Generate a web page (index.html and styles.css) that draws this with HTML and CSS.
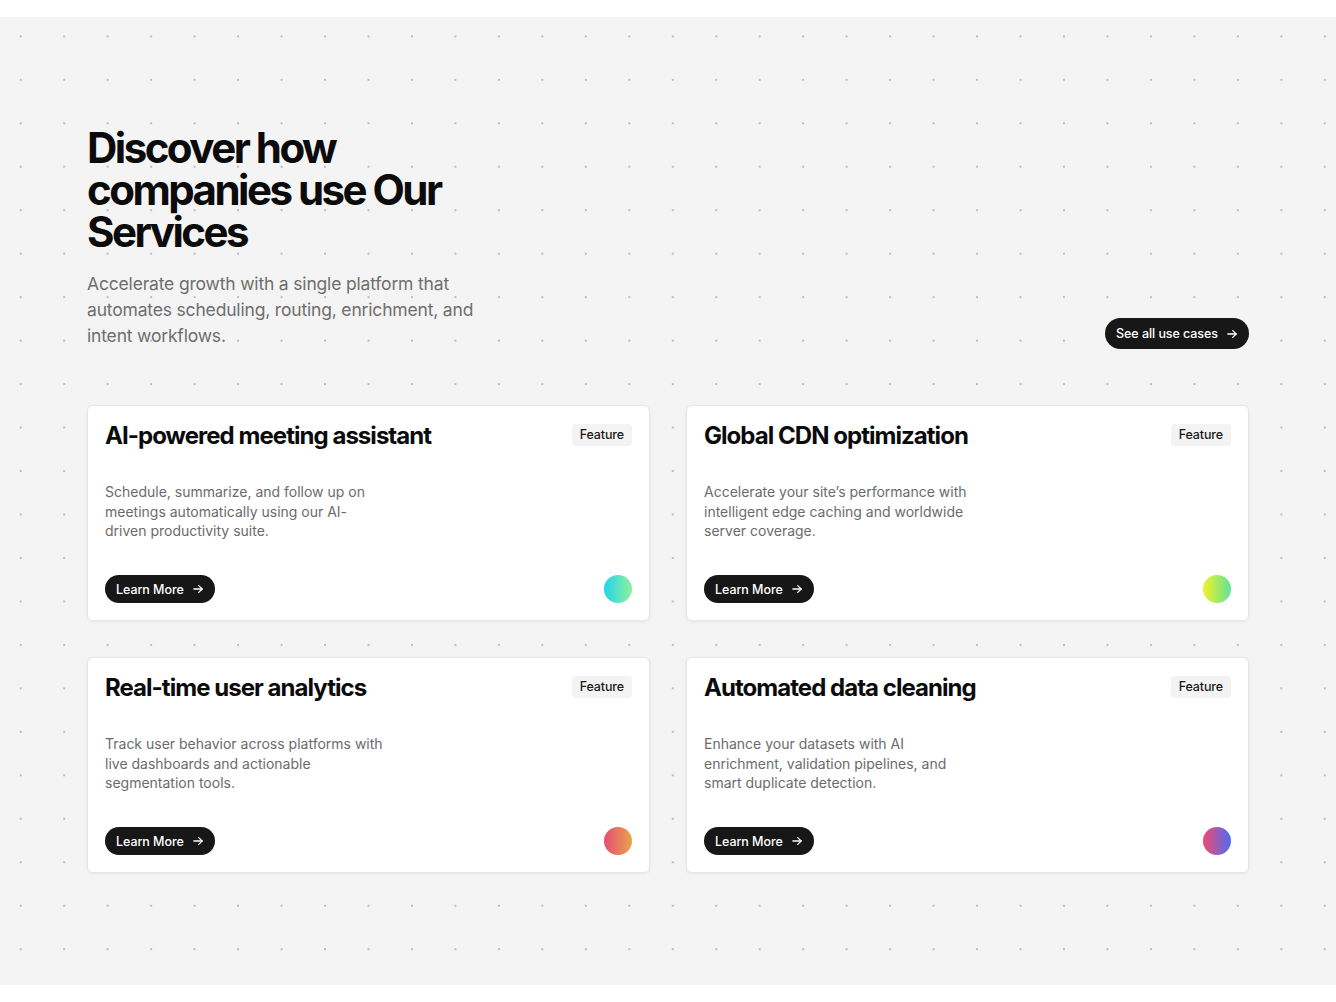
FILE: index.html
```html
<!DOCTYPE html>
<html lang="en">
<head>
<meta charset="utf-8">
<title>Use cases</title>
<link rel="stylesheet" href="styles.css">
</head>
<body>
<div class="page">
  <section class="usecases">
    <div class="container">
      <header class="intro">
        <div class="intro-text">
          <h1 class="intro-title">Discover how companies use Our Services</h1>
          <p class="intro-sub">Accelerate growth with a single platform that automates scheduling, routing, enrichment, and intent workflows.</p>
        </div>
        <a class="pill pill-lg" href="#">See all use cases
          <svg class="arrow" viewBox="0 0 16 16" width="12" height="12" fill="none" stroke="currentColor" stroke-width="1.7" stroke-linecap="round" stroke-linejoin="round"><path d="M2.5 8h11"/><path d="M9 3.5 13.5 8 9 12.5"/></svg>
        </a>
      </header>

      <div class="grid">
        <article class="card">
          <div class="card-head">
            <h2 class="card-title">AI-powered meeting assistant</h2>
            <span class="badge">Feature</span>
          </div>
          <p class="card-desc">Schedule, summarize, and follow up on meetings automatically using our AI-driven productivity suite.</p>
          <div class="card-foot">
            <a class="pill" href="#">Learn More
              <svg class="arrow" viewBox="0 0 16 16" width="12" height="12" fill="none" stroke="currentColor" stroke-width="1.7" stroke-linecap="round" stroke-linejoin="round"><path d="M2.5 8h11"/><path d="M9 3.5 13.5 8 9 12.5"/></svg>
            </a>
            <span class="orb orb-cyan"></span>
          </div>
        </article>

        <article class="card">
          <div class="card-head">
            <h2 class="card-title">Global CDN optimization</h2>
            <span class="badge">Feature</span>
          </div>
          <p class="card-desc">Accelerate your site’s performance with intelligent edge caching and worldwide server coverage.</p>
          <div class="card-foot">
            <a class="pill" href="#">Learn More
              <svg class="arrow" viewBox="0 0 16 16" width="12" height="12" fill="none" stroke="currentColor" stroke-width="1.7" stroke-linecap="round" stroke-linejoin="round"><path d="M2.5 8h11"/><path d="M9 3.5 13.5 8 9 12.5"/></svg>
            </a>
            <span class="orb orb-lime"></span>
          </div>
        </article>

        <article class="card">
          <div class="card-head">
            <h2 class="card-title">Real-time user analytics</h2>
            <span class="badge">Feature</span>
          </div>
          <p class="card-desc">Track user behavior across platforms with live dashboards and actionable segmentation tools.</p>
          <div class="card-foot">
            <a class="pill" href="#">Learn More
              <svg class="arrow" viewBox="0 0 16 16" width="12" height="12" fill="none" stroke="currentColor" stroke-width="1.7" stroke-linecap="round" stroke-linejoin="round"><path d="M2.5 8h11"/><path d="M9 3.5 13.5 8 9 12.5"/></svg>
            </a>
            <span class="orb orb-sunset"></span>
          </div>
        </article>

        <article class="card">
          <div class="card-head">
            <h2 class="card-title">Automated data cleaning</h2>
            <span class="badge">Feature</span>
          </div>
          <p class="card-desc">Enhance your datasets with AI enrichment, validation pipelines, and smart duplicate detection.</p>
          <div class="card-foot">
            <a class="pill" href="#">Learn More
              <svg class="arrow" viewBox="0 0 16 16" width="12" height="12" fill="none" stroke="currentColor" stroke-width="1.7" stroke-linecap="round" stroke-linejoin="round"><path d="M2.5 8h11"/><path d="M9 3.5 13.5 8 9 12.5"/></svg>
            </a>
            <span class="orb orb-violet"></span>
          </div>
        </article>
      </div>
    </div>
  </section>
</div>
</body>
</html>
```

FILE: styles.css
```css
* { box-sizing: border-box; }

html, body {
  margin: 0;
  padding: 0;
  background: #ffffff;
}

body {
  font-family: Inter, "Noto Sans", "Liberation Sans", sans-serif;
  color: #111111;
  -webkit-font-smoothing: antialiased;
}

.page {
  padding-top: 17px;
}

.usecases {
  background-color: #f4f4f4;
  background-image: radial-gradient(circle, #bdbdbd 0.8px, rgba(189,189,189,0) 1.3px);
  background-size: 43.47px 43.47px;
  background-position: -1px -2.4px;
  padding: 110px 0 112px;
}

.container {
  width: 1162px;
  margin: 0 auto;
}

.intro {
  display: flex;
  justify-content: space-between;
  align-items: flex-end;
  margin-bottom: 56px;
}

.intro-text {
  max-width: 400px;
}

.intro-title {
  margin: 0;
  font-size: 42px;
  line-height: 42px;
  font-weight: 700;
  letter-spacing: -0.06em;
  color: #0b0b0b;
}

.intro-sub {
  margin: 18px 0 0;
  font-size: 17.5px;
  line-height: 26px;
  letter-spacing: -0.01em;
  color: #6e6e6e;
}

.pill {
  display: inline-flex;
  align-items: center;
  gap: 8px;
  height: 28px;
  padding: 0 11px 0 11px;
  border-radius: 999px;
  background: #171717;
  color: #ffffff;
  font-size: 12.5px;
  font-weight: 500;
  letter-spacing: -0.005em;
  text-decoration: none;
  white-space: nowrap;
}

.pill-lg {
  height: 31px;
  padding: 0 11px 0 11px;
}

.arrow {
  display: block;
  flex: none;
}

.grid {
  display: grid;
  grid-template-columns: 1fr 1fr;
  gap: 36px;
}

.card {
  display: flex;
  flex-direction: column;
  background: #ffffff;
  border: 1px solid #e6e6e6;
  border-radius: 6px;
  box-shadow: 0 1px 3px rgba(0, 0, 0, 0.06);
  padding: 18px 17px 17px;
  min-height: 216px;
}

.card-head {
  display: flex;
  justify-content: space-between;
  align-items: flex-start;
}

.card-title {
  margin: 0;
  font-size: 24px;
  line-height: 24px;
  font-weight: 700;
  letter-spacing: -0.04em;
  color: #0b0b0b;
}

.badge {
  flex: none;
  margin-top: 0;
  padding: 0 8px;
  height: 22px;
  line-height: 22px;
  border-radius: 4px;
  background: #f3f3f3;
  font-size: 12.5px;
  font-weight: 500;
  letter-spacing: -0.01em;
  color: #1a1a1a;
}

.card-desc {
  margin: 34px 0 0;
  max-width: 278px;
  font-size: 14px;
  line-height: 19.5px;
  color: #6b6b6b;
}

.card-foot {
  margin-top: auto;
  display: flex;
  justify-content: space-between;
  align-items: center;
}

.orb {
  width: 28px;
  height: 28px;
  border-radius: 50%;
  flex: none;
}

.orb-cyan { background: linear-gradient(90deg, #22d3ee, #8ef29a); }
.orb-lime { background: linear-gradient(90deg, #f3f226, #5fe39a); }
.orb-sunset { background: linear-gradient(90deg, #e44d76, #e9a24c); }
.orb-violet { background: linear-gradient(90deg, #ef4a71, #4e6cf1); }
```
